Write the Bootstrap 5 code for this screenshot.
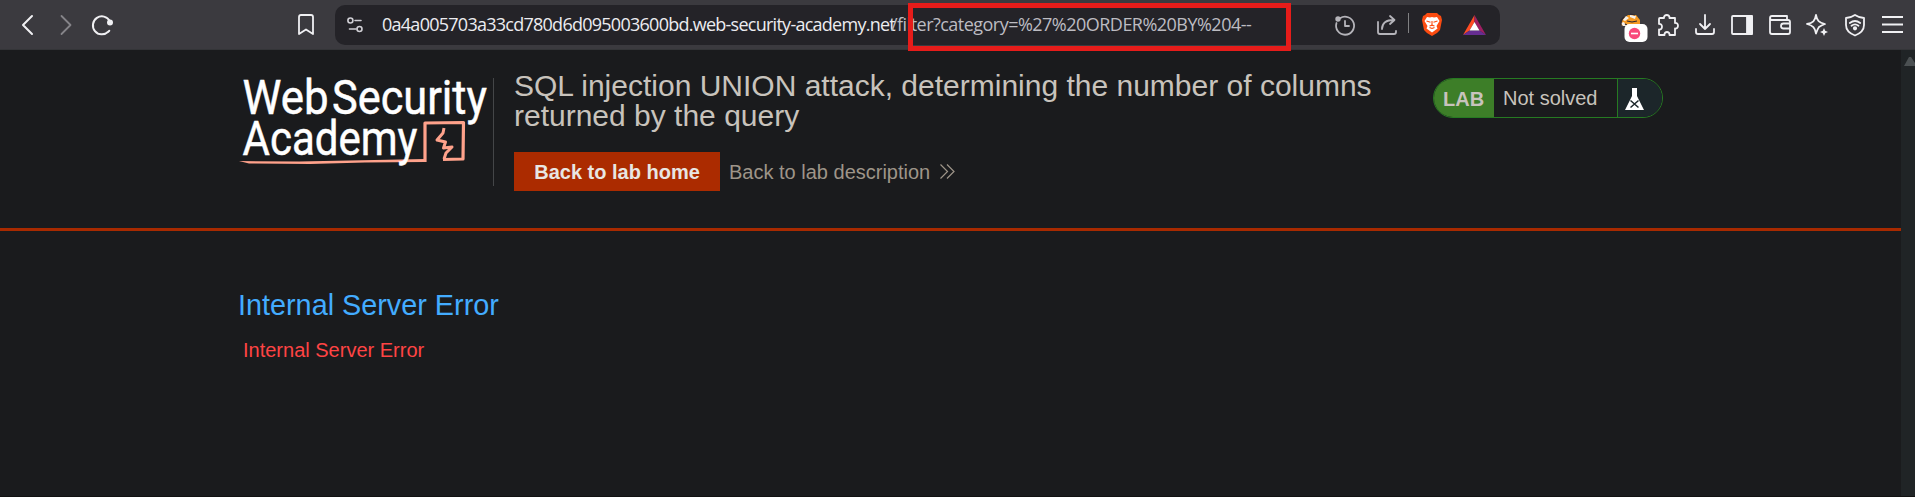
<!DOCTYPE html>
<html lang="en" data-bs-theme="dark">
<head>
<meta charset="utf-8">
<title>SQL injection UNION attack</title>
<link rel="stylesheet" href="https://cdn.jsdelivr.net/npm/bootstrap@5.3.0/dist/css/bootstrap.min.css">
<style>
body{height:497px;background:#1a1b1d;font-family:"Liberation Sans",Arial,sans-serif;font-size:20px;color:#c8c3bc;line-height:30px}
svg{display:block;flex:none;overflow:visible}
.toolbar{height:50px;background:#3b3a3f;border-bottom:1px solid #343538;color:#f0f0f3;padding-left:20px;padding-right:12px}
.i{fill:none;stroke:currentColor;stroke-width:1.8;stroke-linecap:round;stroke-linejoin:round}
.urlbar{width:1165px;height:40px;background:#242328;border-radius:10px;margin-left:20px;color:#d0cfd5;padding-left:12px;padding-right:14px}
.url{font:18px/38px "Open Sans","Noto Sans",sans-serif;margin:-2px 0 0 19px;color:#bdbcc2;white-space:nowrap}
.url .host{color:#ececf0;display:inline-block;width:509px;letter-spacing:-.74px}
.url .path{display:inline-block;letter-spacing:-.52px}
.marker{position:absolute;left:908px;top:3px;width:383px;height:48px;border:5px solid #e61c1a}
.viewport{height:447px;border-bottom:1px solid #111}
.scroll{width:14px;background:#202426;padding-top:7px}
.lab-head{height:181px;border-bottom:3px solid #a82a00;padding-left:239px}
.brandmark{width:255px;height:108px;margin-top:28px;border-right:1px solid #444648}
.title-col{width:900px;margin-left:20px;padding-top:21px}
h2{font-size:30px;line-height:30px;margin:0 0 21px;font-weight:400;white-space:nowrap;color:#c8c3bc!important}
.btn-lab{background:#ab2b00!important;color:#e8e6e3!important;font-size:20px;line-height:40px;font-weight:700;width:206px;height:39px;padding:0;border:0;border-radius:0}
.desc{color:#9e9589;margin-left:9px}
.status{width:230px;height:40px;margin-top:28px;border:1px solid #267a22;border-radius:20px;overflow:hidden;line-height:38px}
.status .tag{width:60px;background:#3d7e28;font-weight:700;padding-left:9px;line-height:40px}
.status .state{width:124px;padding-left:9px;border-right:1px solid #267a22}
.status .flask{flex:1;background:#1c262a;padding:8px 0 0 7px}
.err{padding:57px 0 0 238px}
.err h4{font-size:28.8px;line-height:34px;margin:0 0 13px;color:#43acff;font-weight:400}
.err p{margin:0 0 0 5px;color:#ff4444;line-height:30px}
</style>
</head>
<body class="overflow-hidden">
<nav class="toolbar d-flex align-items-center position-relative">
  <svg width="14" height="20" viewBox="0 0 14 20" class="i" style="stroke-width:2"><path d="M12 1 3 10l9 9"/></svg>
  <svg width="14" height="20" viewBox="0 0 14 20" class="i ms-4" style="color:#858489"><path d="m3.500 1 9 9-9 9"/></svg>
  <svg width="24" height="22" viewBox="0 0 24 22" class="i" style="margin-left:19px;stroke-width:2"><path d="M17.2 17.8A9 9 0 1 1 18.8 7M17 18l1.3-1.2"/><circle cx="19" cy="8.500" r="2" fill="currentColor"/></svg>
  <svg width="16" height="22" viewBox="0 0 16 22" class="i" style="margin:0 1px 0 183px"><path d="M1 20V3q0-2 2-2h10q2 0 2 2v17l-7-4.500z"/></svg>
  <div class="urlbar d-flex align-items-center">
    <svg width="16" height="16" viewBox="0 0 16 16" class="i" style="stroke-width:1.600"><circle cx="3.400" cy="3.500" r="2.500"/><path d="M8 3.500h6M2.500 12H9"/><circle cx="12.500" cy="12" r="2.500"/></svg>
    <div class="url"><span class="host">0a4a005703a33cd780d6d095003600bd.web-security-academy.net</span><span class="path">/filter?category=%27%20ORDER%20BY%204--</span></div>
    <div class="d-flex align-items-center ms-auto">
      <svg width="20" height="20" viewBox="0 0 20 20" class="i" style="color:#b5b4ba"><path d="M5 3.300A9 9 0 1 1 1.500 8M10 6v5h4"/><circle cx="3" cy="4" r="1.800" fill="currentColor"/></svg>
      <svg width="20" height="20" viewBox="0 0 20 20" class="i" style="margin-left:22px;color:#b5b4ba"><path d="M1 7v10q0 2 2 2h14q2 0 2-2v-1M5 14q0-9 12-9M13 1l4.500 4-4.500 4"/></svg>
      <span class="vr" style="height:20px;margin-left:11px;color:#aaa;opacity:.7;width:1px"></span>
      <svg width="20" height="23" viewBox="0 0 20 23" style="margin-left:13px"><path fill="#fb4b10" d="M5 0h10l2 2 2 1 1 4-2 10-3 3-5 3-5-3-3-3L0 7l1-4 2-1z"/><path fill="#fff" d="m5 4 3 .5 2-.5 2 .5 3-.5 2.500 4-3 5 1 2.500-5.500 4-5.500-4 1-2.500-3-5z"/><path d="m4.500 8 4 1.200M15.500 8l-4 1.200M10 8v4M7.500 13l2.500-.8 2.500.8M10 15.500l-2.500-1m2.500 1 2.500-1" fill="none" stroke="#fb4b10" stroke-width="1.100"/></svg>
      <svg width="23" height="20" viewBox="0 0 23 20" style="margin-left:21px"><path fill="#ff4c23" d="M11.500 0v7L6.500 15.500 0 20z"/><path fill="#9e1f63" d="M11.500 0 23 20l-6.500-4.500-5-8.500z"/><path fill="#662d91" d="M0 20h23l-6.500-4.500h-10z"/><path fill="#fff" d="m11.500 7 5 8.500h-10z"/></svg>
    </div>
  </div>
  <div class="d-flex align-items-center ms-auto">
    <svg width="28" height="28" viewBox="0 -2 28 28" style="margin-right:9px"><path fill="#f59a23" d="m1 12 2-6 5-4h8l4 5v6H4z"/><path fill="#f4f1ee" d="m3 7 3-4 3 2-4 3zM10 2l6 1-1 3-5-2zM1 10l3-1 2 4H3z"/><path d="M1 12V7l3-3M7 8l5 1 5-1M10 1l5 1M5 11l2 1" fill="none" stroke="#2c2730" stroke-width="1.200"/><rect x="4.500" y="11" width="23" height="18" rx="5" fill="#fff"/><circle cx="14.500" cy="20.500" r="5.700" fill="#f9497a"/><path d="M11 20.500h7" stroke="#fff" stroke-width="1.600"/></svg>
    <svg width="22" height="22" viewBox="0 0 22 22" class="i"><path d="M3 4h4c-.5-4 6-4 5.500 0H18v5c4-.5 4 6 0 5.500V21h-5.500c.5-4-5.500-4-5 0H2v-5.500c4 .5 4-6 0-5.500V5q0-1 1-1z"/></svg>
    <svg width="20" height="20" viewBox="0 0 20 20" class="i" style="margin-left:16px"><path d="M10 0v14M5 9l5 5 5-5M1 14v3q0 2 2 2h14q2 0 2-2v-3"/></svg>
    <svg width="22" height="20" viewBox="0 0 22 20" class="i" style="margin-left:16px"><rect x="1" y="1" width="20" height="18" rx="1"/><path fill="currentColor" d="M16 1h5v18h-5z"/></svg>
    <svg width="22" height="20" viewBox="0 0 22 20" class="i" style="margin-left:16px"><path d="M18 5V1H3Q1 1 1 3v14q0 2 2 2h16q2 0 2-2V7q0-2-2-2H3Q1 5 1 3M21 8.500h-6.500q-2.500 0-2.500 2.500t2.500 2.500H21"/></svg>
    <svg width="22" height="22" viewBox="0 0 22 22" class="i" style="margin-left:15px"><path d="M10 1c1 6 3 7.500 9 9-3 1-4.500 2-6 3-1.500 2-2 3.500-3 6.500-1-6-3-8-9-9.500 6-1 8-3 9-9z"/><path fill="currentColor" stroke="none" d="m18 14 1.200 2.800L22 18l-2.800 1.200L18 22l-1.200-2.800L14 18l2.800-1.200z"/></svg>
    <svg width="20" height="22" viewBox="0 0 20 22" class="i" style="margin-left:17px"><path d="M10 1q4.500 3 9 3v7q0 7-9 10.500Q1 18 1 11V4q4.500 0 9-3zM4.800 9q5.200-4 10.400 0M6.500 11.800q3.500-2.800 7 0" /><circle cx="10" cy="14.300" r="1.200" fill="currentColor"/></svg>
    <svg width="21" height="17" viewBox="0 0 21 17" class="i" style="margin-left:17px;stroke-linecap:butt;stroke-width:2"><path d="M0 1h21M0 8.500h21M0 16h21"/></svg>
  </div>
  <div class="marker"></div>
</nav>

<div class="viewport d-flex">
  <main class="flex-grow-1">
    <header class="lab-head d-flex align-items-start">
      <div class="brandmark">
        <svg width="250" height="90" viewBox="239 78 250 90">
          <g fill="none" stroke="#ffa28b" stroke-linejoin="round"><path d="M425 162V123l38.500-.5L463 159l-20 .5" stroke-width="3.200"/><path d="m444 128-1 5-6 7 8.500 2-2 6 8.500-1-6 6-2 6" stroke-width="3"/></g>
          <path fill="#ffa28b" d="m239 161 60 .500 75-1.500 51-1v3l-60 .500-55 1.500-61-.5z"/>
          <g fill="#fff" stroke="#fff" stroke-width=".5" font-family="Roboto,sans-serif" font-weight="400" font-size="47.500"><text x="242.500" y="114" textLength="86" lengthAdjust="spacingAndGlyphs">Web</text><text x="332" y="114" textLength="155" lengthAdjust="spacingAndGlyphs">Security</text><text x="242.500" y="155" textLength="175" lengthAdjust="spacingAndGlyphs">Academy</text></g>
        </svg>
      </div>
      <div class="title-col">
        <h2>SQL injection UNION attack, determining the number of columns<br>returned by the query</h2>
        <div class="d-flex align-items-center">
          <a class="btn btn-lab" href="#">Back to lab home</a>
          <a class="desc d-flex align-items-center text-decoration-none" href="#">Back to lab description
            <svg width="15" height="15" viewBox="0 0 15 15" fill="none" stroke="currentColor" stroke-width="1.200" style="margin-left:10px"><path d="m.5.5 7 7-7 7M7 .5l7 7-7 7"/></svg></a>
        </div>
      </div>
      <div class="status d-flex" style="margin-left:19px">
        <div class="tag">LAB</div>
        <div class="state">Not solved</div>
        <div class="flask"><svg width="19" height="24" viewBox="0 0 19 24"><path fill="#fff" d="M7 1h5v8l7 14H0L7 9z"/><path d="M6 0h7M5.500 13.500l8 7m0-7-8 7" stroke="#1c262a" stroke-width="1.500"/></svg></div>
      </div>
    </header>
    <section class="err">
      <h4>Internal Server Error</h4>
      <p>Internal Server Error</p>
    </section>
  </main>
  <div class="scroll"><svg width="14" height="9" viewBox="0 0 14 9"><path fill="#4b5052" d="M8 0h2l6 9H3z"/></svg></div>
</div>
<script src="https://cdn.jsdelivr.net/npm/bootstrap@5.3.0/dist/js/bootstrap.bundle.min.js"></script>
</body>
</html>
